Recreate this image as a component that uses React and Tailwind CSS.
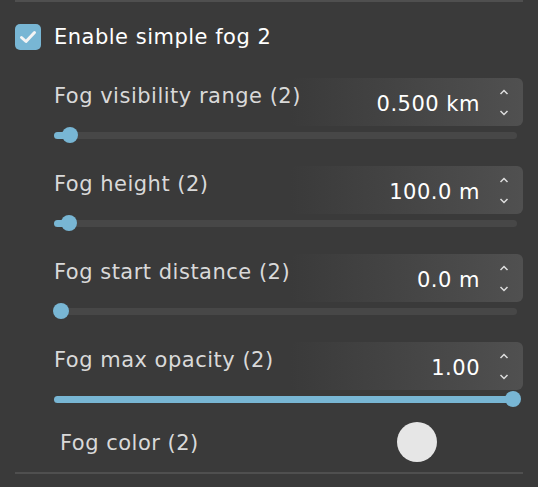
import React from 'react';

const rows = [
  { label: 'Fog visibility range (2)', value: '0.500 km', pos: 0.02 },
  { label: 'Fog height (2)', value: '100.0 m', pos: 0.018 },
  { label: 'Fog start distance (2)', value: '0.0 m', pos: 0 },
  { label: 'Fog max opacity (2)', value: '1.00', pos: 1 },
];

const Spinner = () => (
  <div className="flex flex-col items-center gap-[15px] w-[10px]">
    <svg width="10" height="6" viewBox="0 0 10 6">
      <polyline points="1.5,5 5,1.5 8.5,5" fill="none" stroke="#dedede" strokeWidth="1.5" />
    </svg>
    <svg width="10" height="6" viewBox="0 0 10 6">
      <polyline points="1.5,1 5,4.5 8.5,1" fill="none" stroke="#dedede" strokeWidth="1.5" />
    </svg>
  </div>
);

const Slider = ({ pos }) => {
  // thumb center runs from 7px to 459px of a 463px track
  const center = 7 + pos * 452;
  return (
    <div className="relative w-[463px] h-[16px] flex items-center">
      <div className="w-full h-[7px] rounded-full bg-[#474747]" />
      <div
        className="absolute left-0 top-[4.5px] h-[7px] rounded-full bg-[#78b6d4]"
        style={{ width: center }}
      />
      <div
        className="absolute top-0 w-[16px] h-[16px] rounded-full bg-[#78b6d4]"
        style={{ left: center - 8 }}
      />
    </div>
  );
};

const Row = ({ label, value, pos }) => (
  <div className="flex flex-col">
    {/* label and value box share one grid cell, label drawn over the box's faded left side */}
    <div className="grid">
      <div className="col-start-1 row-start-1 justify-self-end w-[233px] h-[48px] rounded-[6px] bg-gradient-to-r from-[#3a3a3a] to-[#505050] flex items-center justify-end pr-[14px] gap-[19px]">
        <span className="text-[21px] tracking-[0.5px] text-white leading-none mt-[4px]">{value}</span>
        <Spinner />
      </div>
      <span className="col-start-1 row-start-1 self-start relative whitespace-nowrap text-[21px] tracking-[0.5px] text-[#d9d9d9] mt-[6px] leading-[24px]">
        {label}
      </span>
    </div>
    <div className="mt-[1px]">
      <Slider pos={pos} />
    </div>
  </div>
);

export default function App() {
  return (
    <div
      className="w-[538px] h-[487px] bg-[#3a3a3a] px-[15px] overflow-hidden"
      style={{ fontFamily: '"DejaVu Sans", "Noto Sans", sans-serif' }}
    >
      <div className="h-[2px] bg-[#4f4f4f]" />
      <div className="flex items-center gap-[13px] mt-[22px]">
        <div className="w-[26px] h-[26px] rounded-[5px] bg-[#78b6d4] flex items-center justify-center">
          <svg width="18" height="14" viewBox="0 0 18 14">
            <polyline points="2.5,7.5 7,11.5 15.5,2.5" fill="none" stroke="#f4f4f4" strokeWidth="3" strokeLinecap="round" strokeLinejoin="round" />
          </svg>
        </div>
        <span className="text-[21px] tracking-[0.5px] text-white leading-[26px]">Enable simple fog 2</span>
      </div>
      <div className="pl-[39px] mt-[28px] flex flex-col gap-[23px]">
        {rows.map((r) => (
          <Row key={r.label} {...r} />
        ))}
      </div>
      <div className="flex items-center mt-[15px] pl-[45px]">
        <span className="text-[21px] tracking-[0.5px] text-[#d9d9d9] w-[337px] mt-[4px]">Fog color (2)</span>
        <div className="w-[40px] h-[40px] rounded-full bg-[#e6e6e6]" />
      </div>
      <div className="h-[2px] bg-[#4f4f4f] mt-[10px]" />
    </div>
  );
}
